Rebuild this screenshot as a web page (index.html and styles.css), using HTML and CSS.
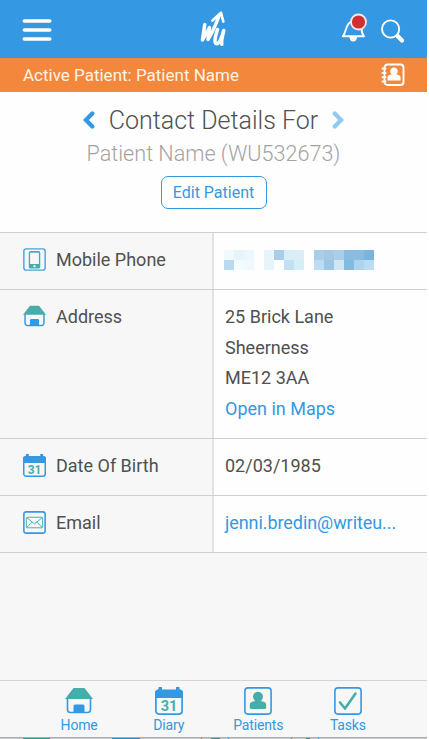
FILE: index.html
```html
<!DOCTYPE html>
<html lang="en">
<head>
<meta charset="utf-8">
<meta name="viewport" content="width=device-width">
<title>Contact Details</title>
<link rel="stylesheet" href="styles.css">
</head>
<body>
<div class="app">
  <header class="topbar">
    <svg class="menu" viewBox="0 0 30 24"><path d="M2.300 2h25.500M2.300 11h25.500M2.300 20h25.500" stroke="#fff" stroke-width="3.500" stroke-linecap="round"/></svg>
    <svg class="logo" viewBox="0 0 50 50" fill="none" stroke="#fff" stroke-linecap="round" stroke-linejoin="round">
      <path stroke-width="3.500" d="M14.800 19.500L12.500 35L19.500 22.500L18 34.500Q23 27 29 11"/>
      <path stroke-width="2.700" d="M22.500 15.500L31 7.800L33.300 16.500"/>
      <path stroke-width="3.500" d="M27.500 24.500C25.500 31 23.500 38 26.500 38.700C29.500 39 31.800 32 33.800 25.500C32.500 31 31 36 31.800 39.300"/>
    </svg>
    <svg class="bell" viewBox="0 0 28 32">
      <path d="M1.800 24.300C5.500 20.500 4.500 11.500 10 9.800c5.500-2 10.500 1 10.500 6.200 0 4 .5 6 2.500 8.300z" fill="none" stroke="#fff" stroke-width="1.900" stroke-linejoin="round"/>
      <path d="M8.500 25h7.500a3.750 4.500 0 0 1-7.500 0z" fill="#fff"/>
      <circle cx="17.500" cy="10" r="7.500" fill="#d32f32" stroke="#f8e9ec" stroke-width="1.800"/>
    </svg>
    <svg class="search" viewBox="0 0 26 26"><circle cx="10.600" cy="10" r="8.600" fill="none" stroke="#fff" stroke-width="1.900"/><path d="m17.500 17 4.500 4.500" stroke="#fff" stroke-width="4.200" stroke-linecap="round"/></svg>
  </header>
  <div class="active-patient">
    <span class="active-label">Active Patient: Patient Name</span>
    <svg class="contacts" viewBox="0 0 24 24">
      <rect x="3.500" y="1.500" width="19" height="20.500" rx="3" fill="none" stroke="#fff" stroke-width="1.900"/>
      <path d="M1.500 5.500h3M1.500 10h3M1.500 14.300h3M1.500 18.500h3" stroke="#fff" stroke-width="2" stroke-linecap="round"/>
      <path d="M10.800 11.500a3.800 3.800 0 1 1 4.400 0q4.300.5 4.300 2.700v3.300h-13v-3.300q0-2.200 4.300-2.700z" fill="#fff"/>
    </svg>
  </div>
  <section class="heading">
    <div class="title-row">
      <svg class="chevron" viewBox="0 0 12 18"><path d="M9.300 2.500 2.900 9l6.400 6.500"/></svg>
      <h1>Contact Details For</h1>
      <svg class="chevron next" viewBox="0 0 12 18"><path d="M2.700 2.500 9.100 9l-6.400 6.500"/></svg>
    </div>
    <p class="patient">Patient Name (WU532673)</p>
    <button class="edit">Edit Patient</button>
  </section>
  <main class="details">
    <div class="row">
      <div class="label">
        <svg class="icon" viewBox="0 0 24 24"><rect x=".9" y=".9" width="22.200" height="22.200" rx="2.500" fill="none" stroke="#48a3e5" stroke-width="1.500"/><path fill-rule="evenodd" d="M8 3h8a2 2 0 0 1 2 2v14.500a2 2 0 0 1-2 2H8a2 2 0 0 1-2-2V5a2 2 0 0 1 2-2zm-.6 2v11.800h9.200V5zM12 17.800a1.200 1.200 0 1 0 .01 0z" fill="#45aeaa"/></svg>
        <span>Mobile Phone</span>
      </div>
      <div class="value">
        <svg class="redacted" viewBox="0 0 15 2" shape-rendering="crispEdges">
          <path fill="#f2f9fc" d="M0 0h1v1H0zM2 1h1v1H2z"/><path fill="#e5f5fb" d="M1 0h1v1H1zM4 0h1v2H4z"/><path fill="#ebf8fb" d="M2 0h1v1H2z"/><path fill="#f2fbfd" d="M1 1h1v1H1z"/><path fill="#b9daef" d="M0 1h1v1H0z"/>
          <path fill="#accde9" d="M5 0h1v1H5z"/><path fill="#d6eef7" d="M6 0h1v1H6zM7 1h1v1H7z"/><path fill="#dcedf6" d="M7 0h1v1H7z"/><path fill="#c4dff3" d="M6 1h1v1H6z"/>
          <path fill="#a9cee9" d="M9 0h1v1H9zM11 0h1v1h-1z"/><path fill="#a7c8e1" d="M10 0h1v1h-1z"/><path fill="#8bbbdf" d="M12 0h2v1h-2z"/><path fill="#79b4dc" d="M14 0h1v1h-1z"/><path fill="#bbdcf3" d="M9 1h1v1H9zM14 1h1v1h-1z"/><path fill="#9cc6e6" d="M10 1h1v1h-1z"/><path fill="#d2e5f3" d="M11 1h1v1h-1z"/><path fill="#84badf" d="M12 1h1v1h-1z"/><path fill="#add4ef" d="M13 1h1v1h-1z"/>
        </svg>
      </div>
    </div>
    <div class="row">
      <div class="label">
        <svg class="icon" viewBox="0 0 28 28"><path d="M2.500 11v11a3 3 0 0 0 3 3h17a3 3 0 0 0 3-3V11" fill="none" stroke="#3498e2" stroke-width="1.800"/><path d="M8.500 1h11L28 12H0z" fill="#45aeaa"/><path d="M8.500 25v-6.500a1.500 1.500 0 0 1 1.500-1.500h8a1.500 1.500 0 0 1 1.500 1.500V25z" fill="#3498e2"/></svg>
        <span>Address</span>
      </div>
      <div class="value"><span>25 Brick Lane</span><span>Sheerness</span><span>ME12 3AA</span><a>Open in Maps</a></div>
    </div>
    <div class="row">
      <div class="label">
        <svg class="icon" viewBox="0 0 28 28"><rect x=".9" y="3.400" width="26.200" height="23.700" rx="3" fill="none" stroke="#3498e2" stroke-width="1.800"/><path d="M0 11V6a3.500 3.500 0 0 1 3.500-3.500V0H7v3h14V0h3.500v2.500A3.500 3.500 0 0 1 28 6v5z" fill="#3498e2"/><text x="14" y="24" class="cal-number">31</text></svg>
        <span>Date Of Birth</span>
      </div>
      <div class="value"><span>02/03/1985</span></div>
    </div>
    <div class="row">
      <div class="label">
        <svg class="icon" viewBox="0 0 24 24" fill="none"><rect x=".9" y=".9" width="22.200" height="22.200" rx="2.500" stroke="#3498e2" stroke-width="1.600"/><g stroke="#45aeaa"><rect x="3.500" y="6.500" width="17" height="11" rx="1"/><path d="m4 7 8 6.500L20 7M4 17l5.500-5.300M20 17l-5.500-5.300"/></g></svg>
        <span>Email</span>
      </div>
      <div class="value"><a class="email">jenni.bredin@writeu...</a></div>
    </div>
  </main>
  <nav class="tabs">
    <a class="tab"><svg viewBox="0 0 28 28"><path d="M2.500 11v11.500a3 3 0 0 0 3 3h17a3 3 0 0 0 3-3V11" fill="none" stroke="#3498e2" stroke-width="1.600"/><path d="M8.500 1h11L28 12H0z" fill="#45aeaa"/><path d="M8.500 25.500V19a1.500 1.500 0 0 1 1.500-1.500h8a1.500 1.500 0 0 1 1.500 1.500v6.500z" fill="#3498e2"/></svg>Home</a>
    <a class="tab"><svg viewBox="0 0 28 28"><rect x=".9" y="3.400" width="26.200" height="23.700" rx="3" fill="none" stroke="#3498e2" stroke-width="1.700"/><path d="M0 11V6a3.500 3.500 0 0 1 3.500-3.500V0H7v3h14V0h3.500v2.500A3.500 3.500 0 0 1 28 6v5z" fill="#3498e2"/><text x="14" y="24" class="cal-number">31</text></svg>Diary</a>
    <a class="tab"><svg viewBox="0 0 28 28"><rect x=".9" y=".9" width="26.200" height="26.200" rx="3" fill="none" stroke="#3498e2" stroke-width="1.600"/><path d="M11.500 14a5 5 0 1 1 5 0q5.700.6 5.700 3.500v3q0 1.500-1.500 1.500H7.300q-1.500 0-1.500-1.500v-3q0-2.900 5.700-3.500z" fill="#45aeaa"/></svg>Patients</a>
    <a class="tab"><svg viewBox="0 0 28 28"><rect x=".9" y=".9" width="26.200" height="26.200" rx="3" fill="none" stroke="#3498e2" stroke-width="1.600"/><path d="m6 15.500 5 6L21.500 6.500" fill="none" stroke="#45aeaa" stroke-width="2.600" stroke-linecap="round" stroke-linejoin="round"/></svg>Tasks</a>
  </nav>
  <svg class="underlay" viewBox="0 0 427 2"><path fill="#adadad" d="M0 0h427v1H0z"/><path fill="#c6c8ca" d="M0 1h427v1H0z"/><path fill="#36918d" d="M23 1h27v1H23zM211 1h9v1h-9zM306 1h4v1h-4z"/><path fill="#3183bd" d="M112 1h28v1h-28zM201 1h1v1h-1zM228 1h1v1h-1zM291 1h1v1h-1zM318 1h1v1h-1z"/></svg>
</div>
</body>
</html>
```
FILE: styles.css
```css
* { box-sizing: border-box; }
body {
  margin: 0;
  background: #fff;
  color: #505050;
  font-family: Roboto, "Liberation Sans", sans-serif;
}
.app {
  width: 427px;
  height: 739px;
  display: flex;
  flex-direction: column;
  background: #f7f7f7;
  overflow: hidden;
}
.topbar {
  height: 58px;
  flex: none;
  display: flex;
  align-items: flex-start;
  background: #3498e2;
}
.menu { width: 30px; height: 24px; margin: 19px 0 0 22px; }
.logo { width: 50px; height: 50px; margin: 5px 0 0 138px; }
.bell { width: 28px; height: 32px; margin: 12px 0 0 101px; }
.search { width: 26px; height: 26px; margin: 19px 0 0 11px; }
.active-patient {
  height: 34px;
  flex: none;
  display: flex;
  align-items: center;
  justify-content: space-between;
  padding: 0 22px 0 23px;
  background: #f3873b;
  color: #fff3e9;
  font-size: 17px;
}
.contacts { width: 24px; height: 24px; }
.heading {
  height: 140px;
  flex: none;
  display: flex;
  flex-direction: column;
  align-items: center;
  background: #fefefe;
}
.title-row {
  height: 32px;
  margin-top: 12px;
  display: flex;
  align-items: center;
  gap: 14px;
}
h1 { margin: 0; padding-top: 1px; font-size: 25px; font-weight: 300; line-height: 32px; white-space: nowrap; }
.chevron { width: 12px; height: 18px; fill: none; stroke: #3498e2; stroke-width: 4.300; stroke-linecap: round; }
.next { stroke: #90caf1; }
.patient { margin: 4px 0 0; color: #a3a3a3; font-size: 21.600px; font-weight: 300; line-height: 27px; }
.edit {
  width: 106px;
  height: 33px;
  margin-top: 9px;
  padding: 0;
  border: 1px solid #3498e2;
  border-radius: 7px;
  background: #fff;
  color: #3498e2;
  font: 16px/28px Roboto, sans-serif;
}
.details { flex: none; border-top: 1px solid #cfcfcf; }
.row { display: grid; grid-template-columns: 212px 1fr; border-bottom: 1px solid #cfcfcf; }
.label { display: flex; align-items: flex-start; gap: 10px; padding: 11px 0 0 23px; font-size: 18px; line-height: 31px; }
.icon { width: 23px; height: 23px; margin-top: 4px; }
.value {
  min-height: 56px;
  display: flex;
  flex-direction: column;
  padding: 12px 0 13px 11px;
  border-left: 2px solid #e2e2e2;
  background: #fefefe;
  font-size: 18px;
  line-height: 30.700px;
}
.value a { color: #3498e2; }
.value .email { letter-spacing: -.07px; }
.redacted { width: 150px; height: 20px; margin: 5px 0 0 -1px; }
.cal-number { fill: #45aeaa; font-size: 14.500px; font-weight: 700; text-anchor: middle; }
.tabs {
  height: 57px;
  margin-top: auto;
  flex: none;
  display: grid;
  grid-template-columns: repeat(4, 89.600px);
  justify-content: center;
  border-top: 1px solid #d4d4d4;
}
.tab { display: flex; flex-direction: column; align-items: center; padding-top: 6px; color: #3498e2; font-size: 14px; letter-spacing: -.15px; line-height: 21px; }
.tab svg { width: 28px; height: 28px; }
.underlay { width: 427px; height: 2px; flex: none; }
```
